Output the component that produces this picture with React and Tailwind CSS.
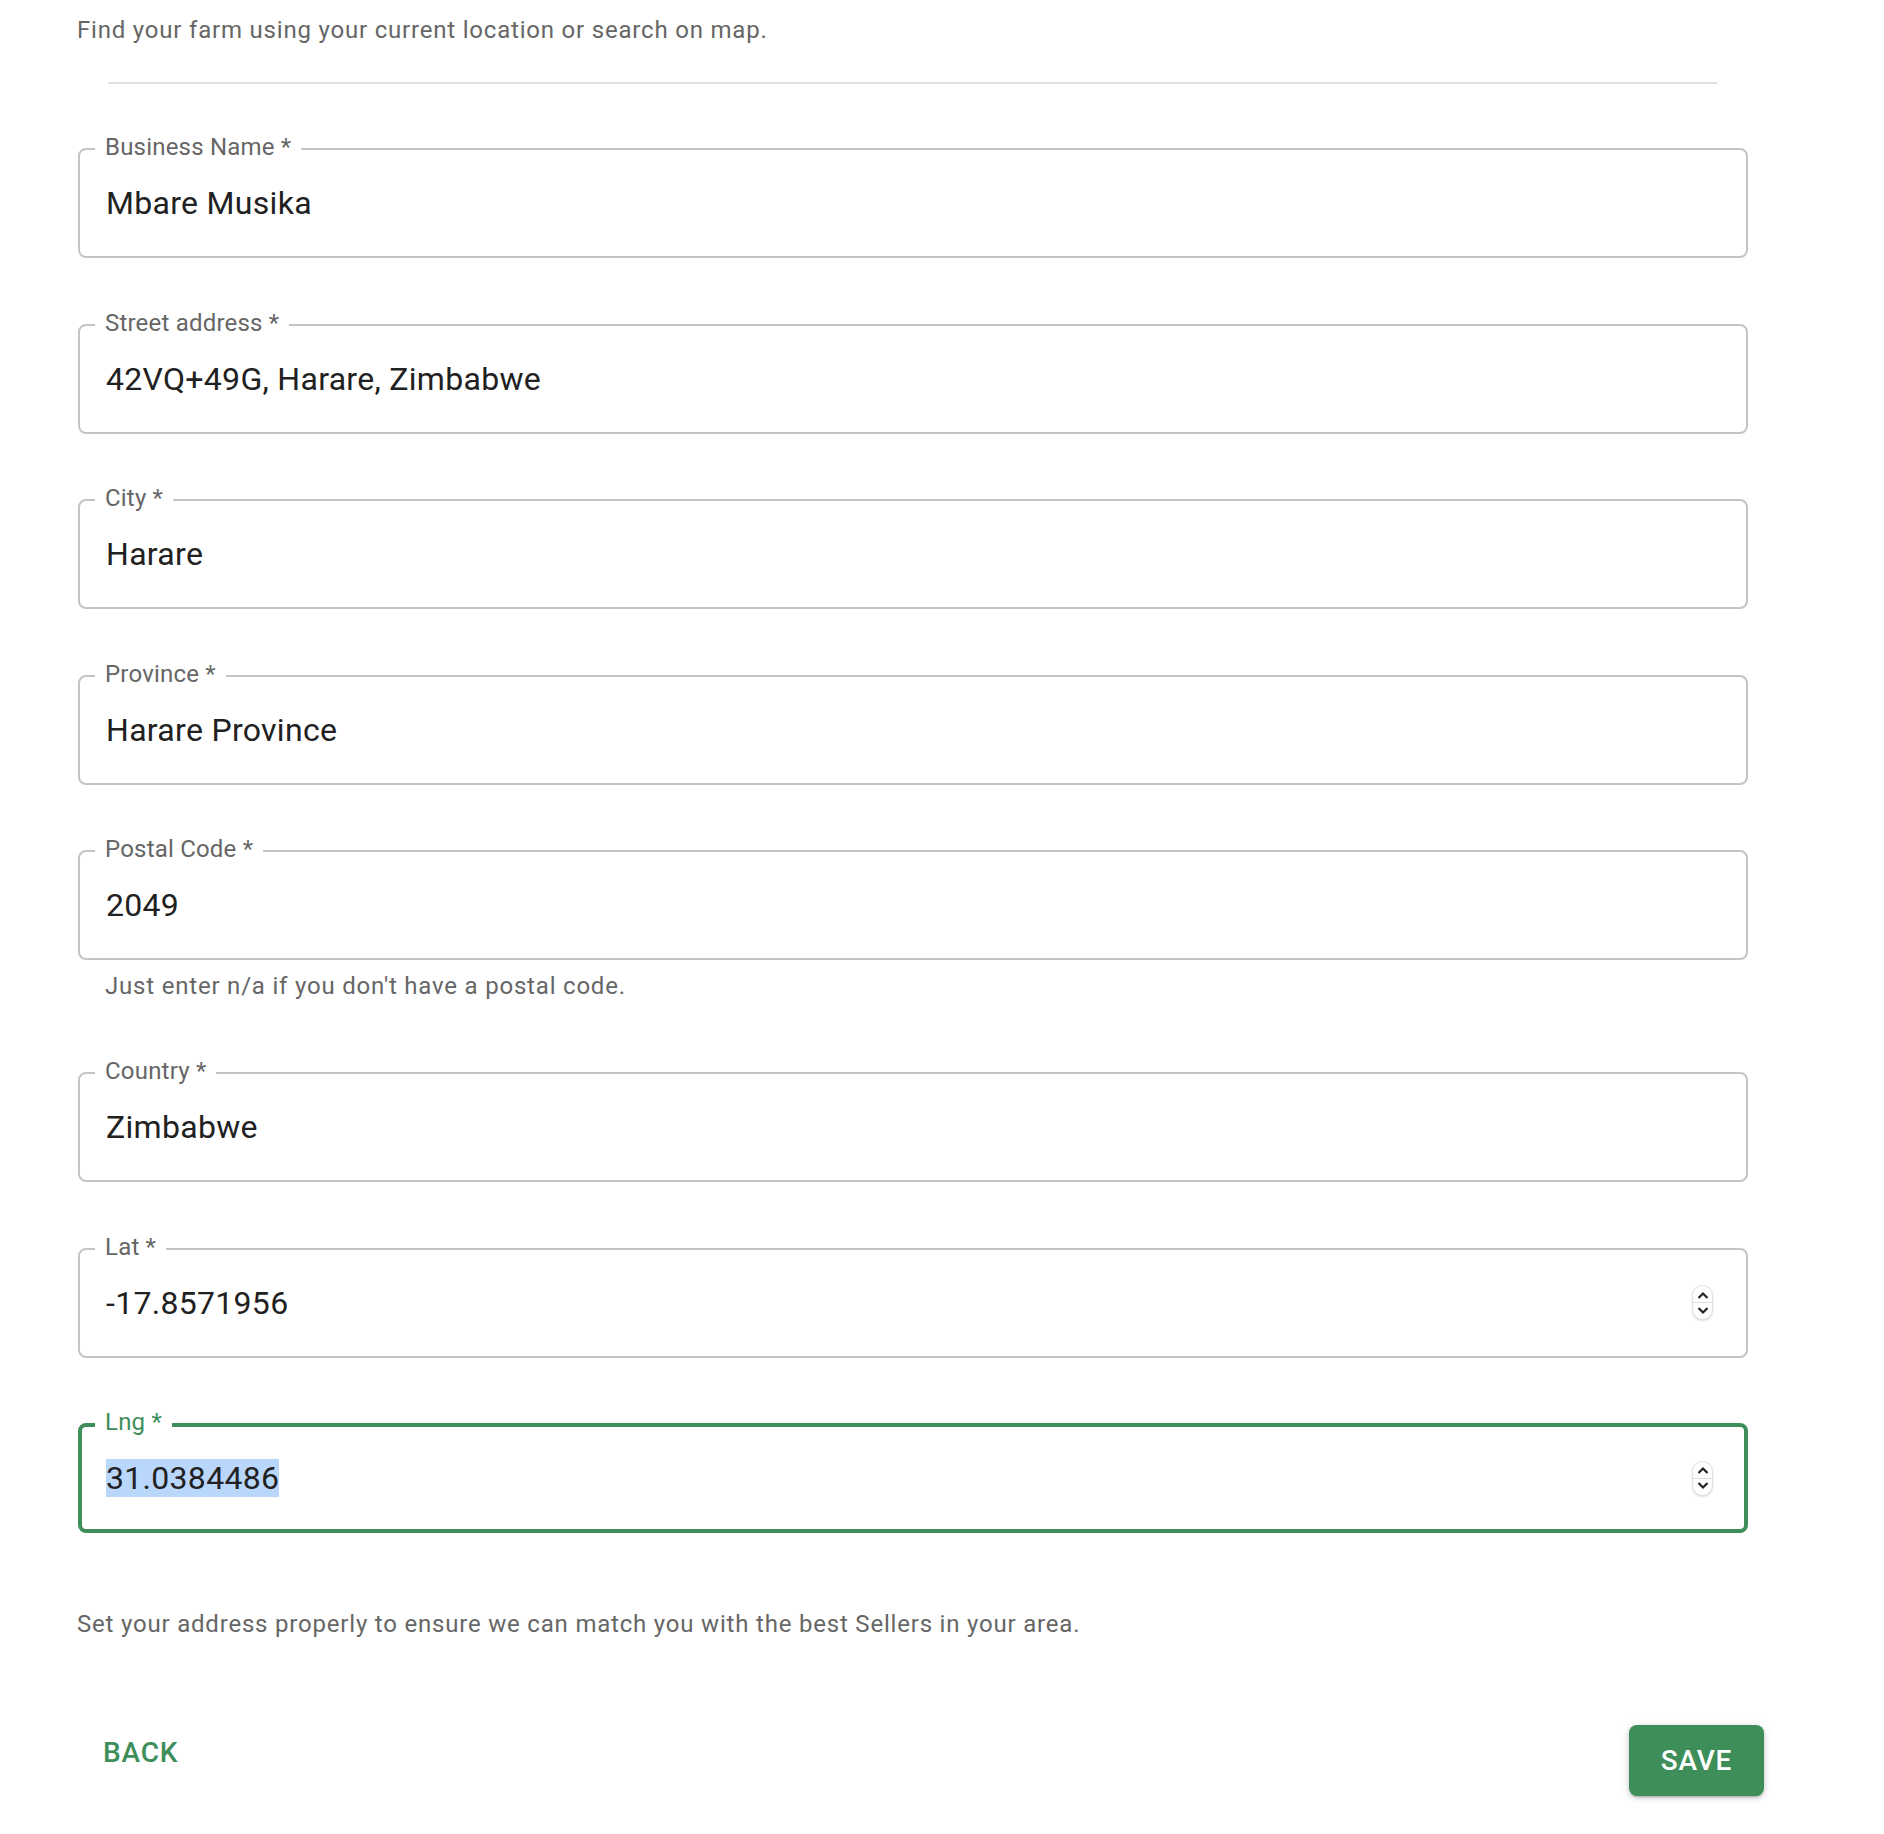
const fields = [
  { label: "Business Name", value: "Mbare Musika" },
  { label: "Street address", value: "42VQ+49G, Harare, Zimbabwe" },
  { label: "City", value: "Harare" },
  { label: "Province", value: "Harare Province" },
  {
    label: "Postal Code",
    value: "2049",
    helper: "Just enter n/a if you don't have a postal code.",
  },
  { label: "Country", value: "Zimbabwe" },
  { label: "Lat", value: "-17.8571956", number: true },
  { label: "Lng", value: "31.0384486", number: true, focused: true },
];

function Spinner() {
  return (
    <div className="flex h-[35px] w-[21px] flex-col overflow-hidden rounded-full border border-[#e2e2e2] bg-white shadow-[0_1px_2px_rgba(0,0,0,0.15)]">
      <div className="flex flex-1 items-center justify-center border-b border-[#dcdcdc] pt-[2px]">
        <svg width="14" height="9" viewBox="0 0 14 9">
          <path d="M2.5 7 L7 2.5 L11.5 7" fill="none" stroke="#222" strokeWidth="2.2" />
        </svg>
      </div>
      <div className="flex flex-1 items-center justify-center pb-[2px]">
        <svg width="14" height="9" viewBox="0 0 14 9">
          <path d="M2.5 2 L7 6.5 L11.5 2" fill="none" stroke="#222" strokeWidth="2.2" />
        </svg>
      </div>
    </div>
  );
}

function Field({ label, value, helper, number, focused }) {
  return (
    <div className="mt-[65.6px] first:mt-0">
      <div
        className={
          "relative ml-px flex h-[110px] items-center rounded-[8px] " +
          (focused
            ? "border-[4px] border-[#3e8e5a] pl-[24px] pr-[31px]"
            : "border-2 border-[#c4c4c4] pl-[26px] pr-[33px]")
        }
      >
        <span
          className={
            "absolute bg-white px-[10px] text-[24px] leading-[24px] tracking-[0.2px] " +
            (focused ? "left-[13px] -top-[17px] text-[#3e8e5a]" : "left-[15px] -top-[15px] text-[#666666]")
          }
        >
          {label} *
        </span>
        <div className="flex-1 text-[32px] leading-[40px] tracking-[0.3px] text-[#212121]">
          {focused ? <span className="bg-[#b9d6fb]">{value}</span> : value}
        </div>
        {number && <Spinner />}
      </div>
      {helper && (
        <p className="ml-[28px] mt-[6px] text-[24px] leading-[40px] tracking-[0.8px] text-[#666666]">
          {helper}
        </p>
      )}
    </div>
  );
}

export default function App() {
  return (
    <div className="min-h-[1834px] bg-white font-['Roboto',sans-serif]">
      <div className="ml-[77px] w-[1671px] pt-[10px]">
        <p className="text-[24px] leading-[40px] tracking-[0.8px] text-[#666666]">
          Find your farm using your current location or search on map.
        </p>
        <div className="ml-[31px] mt-[32px] h-[2px] w-[1609px] bg-[#e0e0e0]" />

        <div className="mt-[64px] flex flex-col">
          {fields.map((f) => (
            <Field key={f.label} {...f} />
          ))}
        </div>

        <p className="mt-[71px] text-[24px] leading-[40px] tracking-[0.8px] text-[#666666]">
          Set your address properly to ensure we can match you with the best Sellers in your area.
        </p>

        <div className="mt-[81px] flex items-start justify-between">
          <button className="ml-[10px] flex h-[56px] items-center px-[16px] text-[28px] font-medium tracking-[0.8px] text-[#3e8e5a]">
            BACK
          </button>
          <button className="-mr-[16px] flex h-[71px] w-[135px] items-center justify-center rounded-[8px] bg-[#3e8e5a] text-[28px] font-medium tracking-[0.8px] text-white shadow-[0_3px_2px_-2px_rgba(0,0,0,0.2),0_2px_4px_rgba(0,0,0,0.14),0_1px_10px_rgba(0,0,0,0.12)]">
            SAVE
          </button>
        </div>
      </div>
    </div>
  );
}
